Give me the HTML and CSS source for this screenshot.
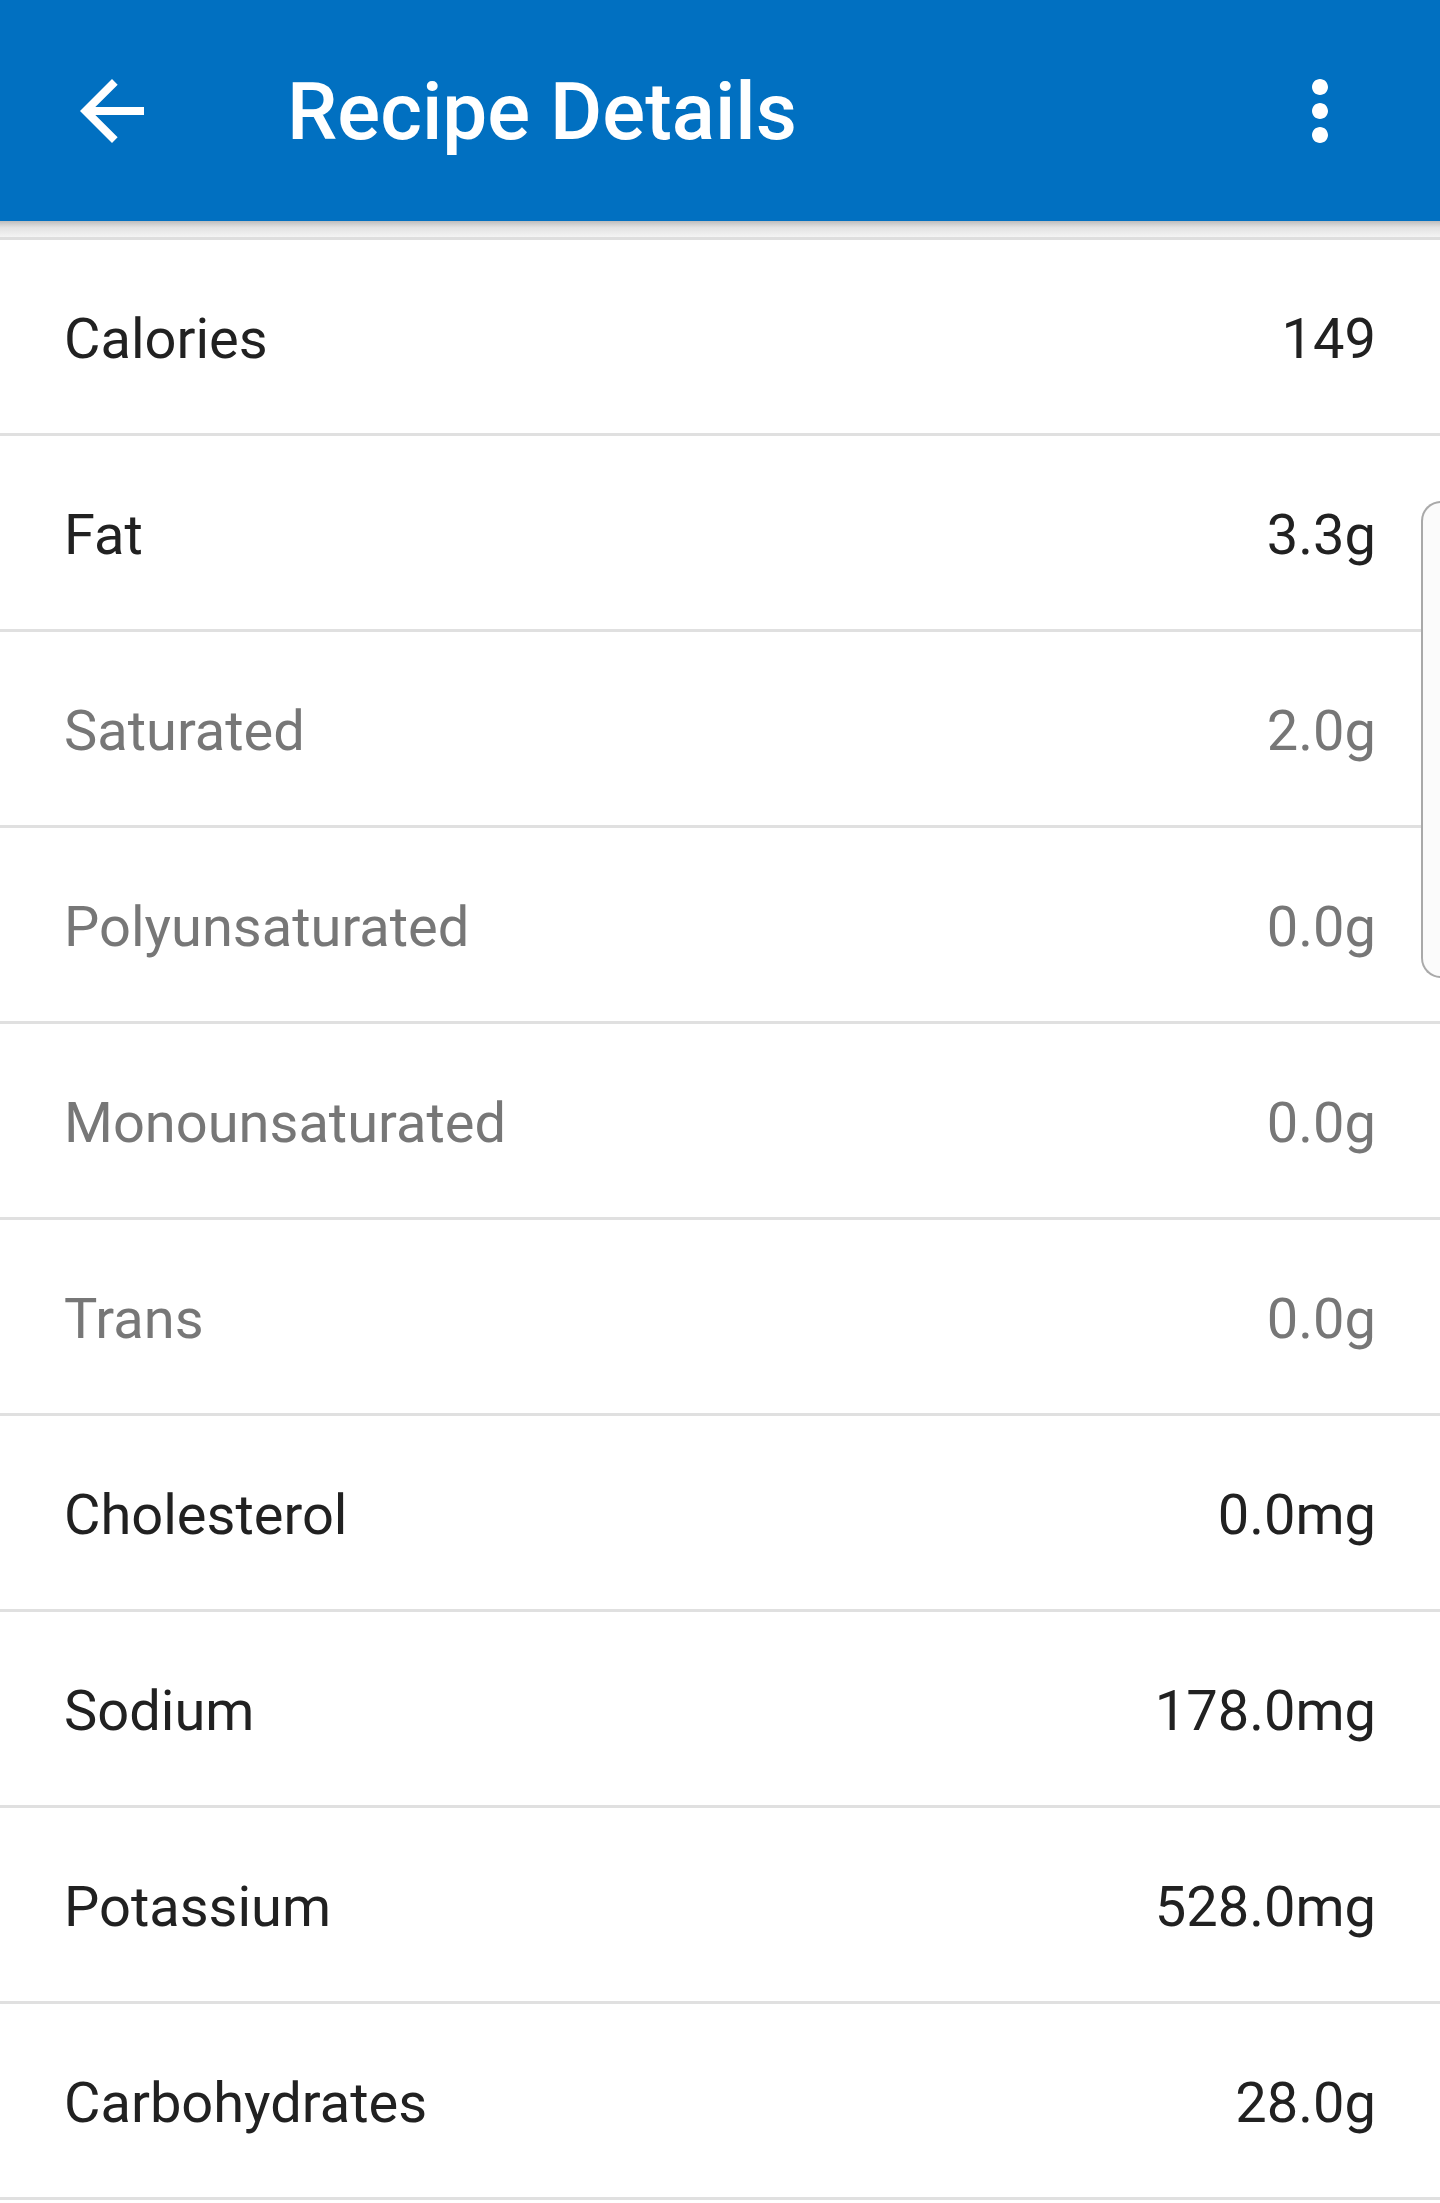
FILE: index.html
```html
<!DOCTYPE html>
<html lang="en">
<head>
<meta charset="utf-8">
<title>Recipe Details</title>
<link rel="stylesheet" href="styles.css">
</head>
<body>
<div class="app">
  <header class="appbar">
    <button class="icon-btn back" aria-label="Back">
      <svg viewBox="0 0 24 24" width="96" height="96"><path fill="#fff" d="M20 11H7.830l5.59-5.59L12 4l-8 8 8 8 1.41-1.41L7.83 13H20v-2z"/></svg>
    </button>
    <h1 class="title">Recipe Details</h1>
    <button class="icon-btn menu" aria-label="More options">
      <svg viewBox="0 0 24 24" width="96" height="96"><path fill="#fff" d="M12 8c1.1 0 2-.9 2-2s-.9-2-2-2-2 .9-2 2 .9 2 2 2zm0 2c-1.1 0-2 .9-2 2s.9 2 2 2 2-.9 2-2-.9-2-2-2zm0 6c-1.1 0-2 .9-2 2s.9 2 2 2 2-.9 2-2-.9-2-2-2z"/></svg>
    </button>
  </header>
  <div class="shade"></div>
  <ul class="nutrients">
    <li class="row"><span class="label">Calories</span><span class="value">149</span></li>
    <li class="row"><span class="label">Fat</span><span class="value">3.3g</span></li>
    <li class="row sub"><span class="label">Saturated</span><span class="value">2.0g</span></li>
    <li class="row sub"><span class="label">Polyunsaturated</span><span class="value">0.0g</span></li>
    <li class="row sub"><span class="label">Monounsaturated</span><span class="value">0.0g</span></li>
    <li class="row sub"><span class="label">Trans</span><span class="value">0.0g</span></li>
    <li class="row"><span class="label">Cholesterol</span><span class="value">0.0mg</span></li>
    <li class="row"><span class="label">Sodium</span><span class="value">178.0mg</span></li>
    <li class="row"><span class="label">Potassium</span><span class="value">528.0mg</span></li>
    <li class="row"><span class="label">Carbohydrates</span><span class="value">28.0g</span></li>
  </ul>
  <div class="edge-handle"></div>
</div>
</body>
</html>
```
FILE: styles.css
```css
html, body {
  margin: 0;
  padding: 0;
  background: #ffffff;
  overflow: hidden;
}

body {
  font-family: Roboto, "Noto Sans", "Liberation Sans", sans-serif;
  width: 1440px;
  height: 2203px;
}

.app {
  position: relative;
  width: 1440px;
  height: 2203px;
  overflow: hidden;
}

.appbar {
  display: flex;
  align-items: center;
  height: 221px;
  background: #0170c1;
  padding: 0 72px 0 64px;
  box-sizing: border-box;
  position: relative;
  z-index: 2;
}

.icon-btn {
  display: flex;
  align-items: center;
  justify-content: center;
  width: 96px;
  height: 96px;
  padding: 0;
  margin: 0;
  border: 0;
  background: transparent;
}

.icon-btn svg {
  display: block;
}

.title {
  flex: 1;
  margin: 2px 0 0 127px;
  color: #ffffff;
  font-family: Roboto, "Noto Sans", sans-serif;
  font-weight: 500;
  font-size: 80px;
  line-height: 1;
  letter-spacing: 0;
}

.shade {
  height: 16px;
  background: linear-gradient(to bottom, #bdbdbd 0%, #e2e2e2 40%, #f4f4f4 100%);
}

.nutrients {
  list-style: none;
  margin: 0;
  padding: 0;
  border-top: 3px solid #dedede;
}

.row {
  display: flex;
  align-items: center;
  justify-content: space-between;
  box-sizing: border-box;
  height: 196px;
  padding: 7px 64px 0 64px;
  border-bottom: 3px solid #e0e0e0;
  font-size: 56px;
  color: #212121;
}

.row.sub {
  color: #777777;
}

.label,
.value {
  line-height: 1.2;
}

.edge-handle {
  position: absolute;
  left: 1421px;
  top: 501px;
  width: 60px;
  height: 477px;
  box-sizing: border-box;
  border: 2px solid #a9a9a9;
  border-right: 0;
  border-radius: 20px 0 0 20px;
  background: #fbfbfb;
}
```
